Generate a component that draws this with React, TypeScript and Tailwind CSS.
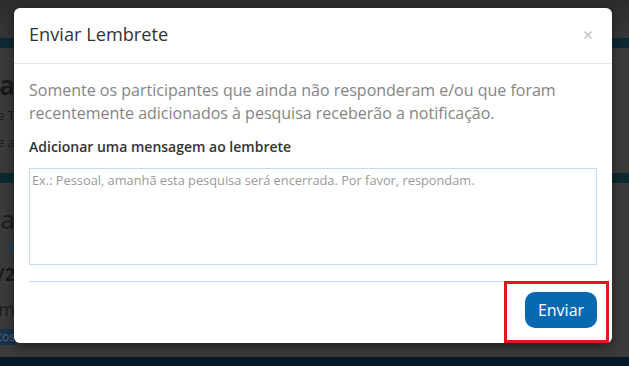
import { X } from 'lucide-react'

export default function App() {
  return (
    <div className="relative w-[629px] h-[366px] overflow-hidden bg-[#3b3b3b] font-['Open_Sans',sans-serif]">
      {/* page behind the overlay */}
      <div className="flex flex-col">
        <div className="h-[38px] bg-gradient-to-b from-[#2c2c2c] to-[#383838]" />
        <div className="h-[10px] bg-[#0d2a33]" />
        <div className="h-[125px] w-[15px] overflow-hidden pt-[21px] text-[#1b1b1b] flex flex-col items-end">
          <p className="text-[26px] font-bold leading-[32px] whitespace-nowrap">Pesquisa</p>
          <p className="text-[13px] mt-[5px] text-[#1e1e1e] whitespace-nowrap">para T</p>
          <p className="text-[13px] mt-[7px] text-[#1e1e1e] whitespace-nowrap">sobre a</p>
        </div>
        <div className="h-[10px] bg-[#0d2a33]" />
        <div className="h-[174px] w-[15px] overflow-hidden pt-[20px] text-[#1b1b1b] flex flex-col items-end">
          <p className="text-[26px] leading-[32px] whitespace-nowrap">Encerra</p>
          <p className="text-[13px] text-[#0b4a7a] mt-[2px] whitespace-nowrap">a</p>
          <p className="text-[18px] font-bold mt-[4px] whitespace-nowrap">12/2</p>
          <p className="text-[18px] mt-[8px] whitespace-nowrap">Semam</p>
          <div className="mt-[6px] w-[60px] h-[16px] bg-[#17324b] text-[12px] leading-[16px] text-[#52657a] text-right shrink-0">Contatos</div>
        </div>
        <div className="h-[9px] bg-[#031a28]" />
      </div>

      {/* modal */}
      <div className="absolute left-[14px] top-[8px] w-[598px] h-[335px] bg-white rounded-[6px] shadow-[0_3px_12px_rgba(0,0,0,0.5)] flex flex-col">
        <div className="h-[56px] border-b border-[#e5e5e5] px-[15px] flex items-center justify-between">
          <h3 className="text-[18.2px] text-[#333] pb-[1px]">Enviar Lembrete</h3>
          <X className="text-[#c4c4c4] mr-[3px] mb-[2px]" size={12} strokeWidth={3.5} />
        </div>
        <div className="px-[15px] pt-[15px]">
          <p className="text-[16px] leading-[23px] text-[#858585]">
            Somente os participantes que ainda não responderam e/ou que foram recentemente adicionados à pesquisa receberão a notificação.
          </p>
          <p className="mt-[12px] text-[14px] font-semibold text-[#333] leading-[20px]">Adicionar uma mensagem ao lembrete</p>
          <textarea
            className="mt-[11px] block w-full h-[97px] resize-none border border-[#c6dbee] px-[2px] py-[2px] text-[12.8px] outline-none placeholder:text-[#9a9a9a]"
            placeholder="Ex.: Pessoal, amanhã esta pesquisa será encerrada. Por favor, respondam."
          />
        </div>
        <div className="mx-[15px] mt-[16px] border-t border-[#c6dbee] pt-[10px] flex justify-end">
          <button type="button" className="w-[72px] h-[36px] rounded-[10px] bg-[#0869b3] text-white text-[16px]">
            Enviar
          </button>
        </div>
      </div>

      {/* highlight */}
      <div className="absolute left-[504px] top-[281px] w-[105px] h-[62px] border-[3px] border-[#e3161d]" />
    </div>
  )
}
